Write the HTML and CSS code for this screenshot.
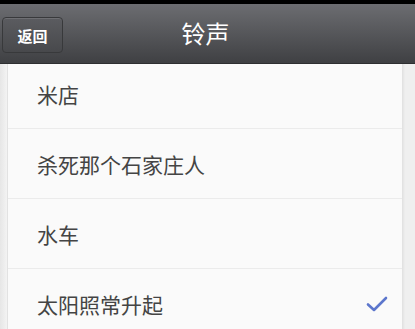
FILE: index.html
```html
<!DOCTYPE html>
<html lang="zh">
<head>
<meta charset="utf-8">
<link rel="stylesheet" href="styles.css">
</head>
<body>
<div class="screen">
  <div class="status"></div>
  <header class="navbar">
    <button class="back">返回</button>
    <h1 class="title">铃声</h1>
  </header>
  <div class="content">
    <ul class="list">
      <li class="row first">米店</li>
      <li class="row">杀死那个石家庄人</li>
      <li class="row">水车</li>
      <li class="row selected">太阳照常升起
        <svg class="check" width="22" height="18" viewBox="0 0 22 18"><path d="M2 9.5 L8 15 L20 3" fill="none" stroke="#5c76cc" stroke-width="2.6" stroke-linecap="round" stroke-linejoin="round"/></svg>
      </li>
    </ul>
  </div>
</div>
</body>
</html>
```
FILE: styles.css
```css
* { box-sizing: border-box; margin: 0; padding: 0; }
html, body { width: 415px; height: 329px; overflow: hidden; }
body { font-family: "Noto Sans CJK SC", "Noto Sans", sans-serif; background: #ededed; }
.screen { display: flex; flex-direction: column; height: 329px; }
.status { height: 4px; background: #000; flex: none; }
.navbar {
  flex: none;
  height: 60px;
  position: relative;
  display: flex;
  align-items: center;
  justify-content: center;
  background: linear-gradient(#6c6d71, #3f4043);
  border-bottom: 1px solid #2e2f31;
}
.back {
  position: absolute;
  left: 2px;
  top: 13px;
  width: 61px;
  height: 36px;
  border-radius: 4px;
  border: 1px solid #38393b;
  background: linear-gradient(#5b5c60, #48494c);
  box-shadow: inset 0 1px 0 rgba(255,255,255,0.12);
  color: #fff;
  font-family: "Noto Sans CJK SC", sans-serif;
  font-size: 15px;
  font-weight: 700;
}
.title {
  color: #fff;
  font-size: 24px;
  font-weight: 400;
  margin-top: -2px;
  margin-left: -4px;
}
.content { flex: 1; padding: 0 12px 0 7px; background: linear-gradient(90deg, #e6e6e6 0, #f3f3f3 7px, #f3f3f3 402px, #e4e4e4 403px, #efefef 405px); }
.list { list-style: none; background: #fafafa; border-left: 1px solid #e2e2e2; border-right: 1px solid #e2e2e2; }
.row {
  height: 70px;
  display: flex;
  align-items: center;
  justify-content: space-between;
  padding: 0 14px 0 29px;
  border-bottom: 1px solid #ebebeb;
  font-size: 21px;
  color: #444;
}
.row.first { height: 65px; padding-bottom: 5px; }
.row:last-child { border-bottom: none; }
```
